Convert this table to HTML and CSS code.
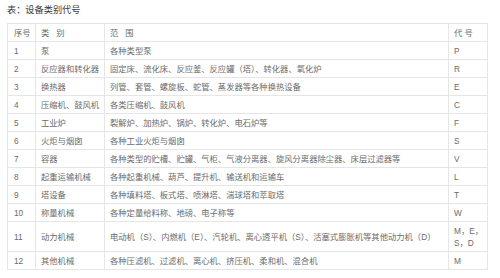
FILE: index.html
```html
<!DOCTYPE html>
<html lang="zh">
<head>
<meta charset="utf-8">
<link rel="stylesheet" href="styles.css">
</head>
<body>
<div class="page">
  <p class="title">表：设备类别代号</p>
  <table class="codes">
    <colgroup>
      <col class="c-no"><col class="c-cat"><col class="c-scope"><col class="c-code">
    </colgroup>
    <thead>
      <tr><th>序号</th><th>类&nbsp;&nbsp;&nbsp;别</th><th>范&nbsp;&nbsp;&nbsp;围</th><th>代 号</th></tr>
    </thead>
    <tbody>
      <tr><td>1</td><td>泵</td><td>各种类型泵</td><td>P</td></tr>
      <tr><td>2</td><td>反应器和转化器</td><td>固定床、流化床、反应釜、反应罐（塔）、转化器、氧化炉</td><td>R</td></tr>
      <tr><td>3</td><td>换热器</td><td>列管、套管、螺旋板、蛇管、蒸发器等各种换热设备</td><td>E</td></tr>
      <tr><td>4</td><td>压缩机、鼓风机</td><td>各类压缩机、鼓风机</td><td>C</td></tr>
      <tr><td>5</td><td>工业炉</td><td>裂解炉、加热炉、锅炉、转化炉、电石炉等</td><td>F</td></tr>
      <tr><td>6</td><td>火炬与烟囱</td><td>各种工业火炬与烟囱</td><td>S</td></tr>
      <tr><td>7</td><td>容器</td><td>各种类型的贮槽、贮罐、气柜、气液分离器、旋风分离器除尘器、床层过滤器等</td><td>V</td></tr>
      <tr><td>8</td><td>起重运输机械</td><td>各种起重机械、葫芦、提升机、输送机和运输车</td><td>L</td></tr>
      <tr><td>9</td><td>塔设备</td><td>各种填料塔、板式塔、喷淋塔、湍球塔和萃取塔</td><td>T</td></tr>
      <tr><td>10</td><td>称量机械</td><td>各种定量给料称、地磅、电子称等</td><td>W</td></tr>
      <tr><td>11</td><td>动力机械</td><td>电动机（S）、内燃机（E）、汽轮机、离心透平机（S）、活塞式膨胀机等其他动力机（D）</td><td>M，E，<br>S，D</td></tr>
      <tr><td>12</td><td>其他机械</td><td>各种压滤机、过滤机、离心机、挤压机、柔和机、混合机</td><td>M</td></tr>
    </tbody>
  </table>
</div>
</body>
</html>
```

FILE: styles.css
```css
html, body {
  margin: 0;
  padding: 0;
  background: #ffffff;
}
.page {
  padding: 4px 7px;
  font-family: "Liberation Sans", "Noto Sans CJK SC", sans-serif;
}
.title {
  margin: 0 0 7px 0;
  font-size: 9.2px;
  line-height: 12px;
  color: #3a3a3a;
  font-weight: normal;
}
.codes {
  width: 480px;
  table-layout: fixed;
  border-collapse: collapse;
  font-size: 8.3px;
  color: #6b6b6b;
}
.c-no { width: 28px; }
.c-cat { width: 69px; }
.c-scope { width: 344px; }
.c-code { width: 39px; }
.codes th,
.codes td {
  border: 1px solid #e6e6e6;
  padding: 3px 3px 2px 5px;
  line-height: 12px;
  text-align: left;
  vertical-align: middle;
  font-weight: normal;
  white-space: nowrap;
}
.codes th:first-child,
.codes td:first-child {
  padding-left: 6px;
}
```
